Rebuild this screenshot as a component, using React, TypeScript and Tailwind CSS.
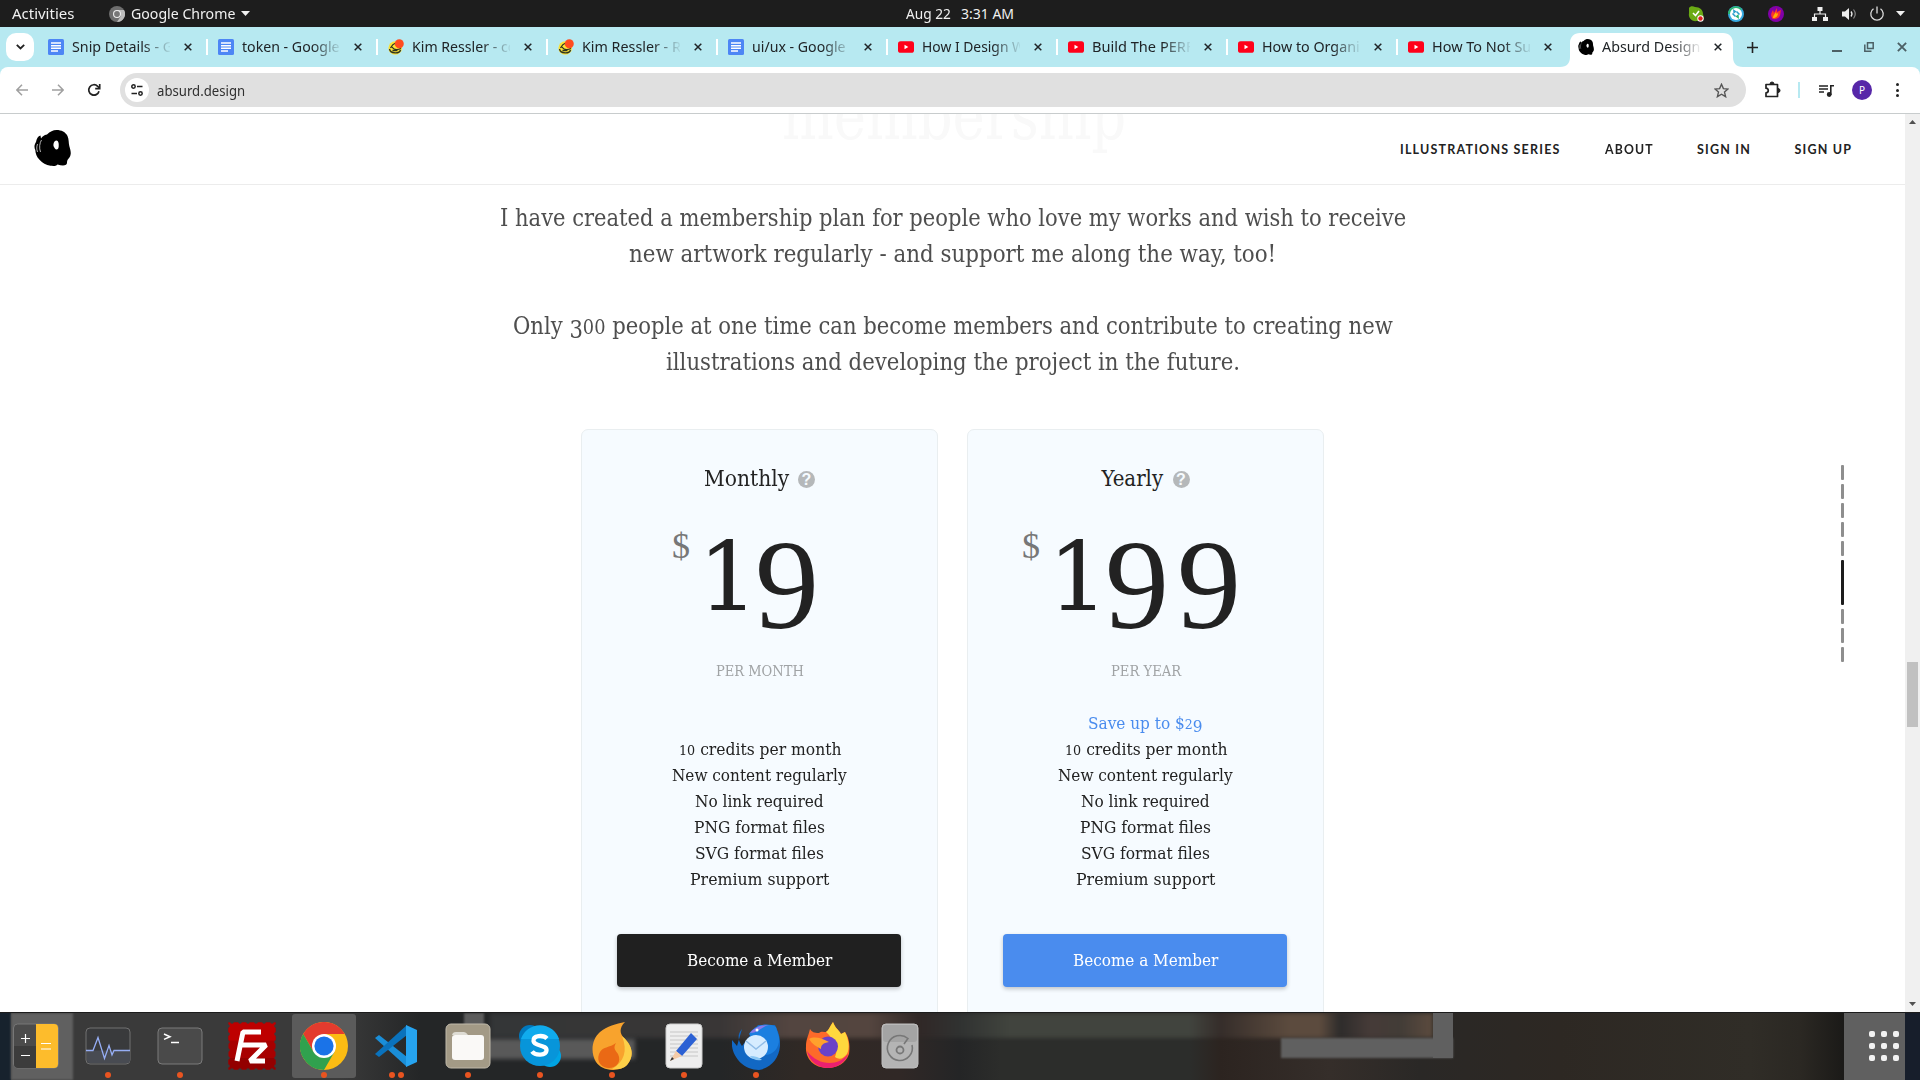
import { useLayoutEffect, useRef, useState, type ReactNode } from "react";
import clsx from "clsx";

/* Text squeezed or stretched horizontally to an exact run length. */
function Fit({ w, className, children }: { w: number; className?: string; children: ReactNode }) {
  const ref = useRef<HTMLSpanElement>(null);
  const [scale, setScale] = useState(1);
  useLayoutEffect(() => {
    if (ref.current) setScale(w / ref.current.offsetWidth);
  }, [w]);
  return (
    <span className={clsx("inline-flex shrink-0 whitespace-nowrap", className)} style={{ width: w }}>
      <span ref={ref} className="inline-block shrink-0 origin-left whitespace-pre" style={{ transform: `scaleX(${scale})` }}>
        {children}
      </span>
    </span>
  );
}

type Icon = "docs" | "kim" | "yt" | "absurd";
const tabs: { icon: Icon; title: string; w: number }[] = [
  { icon: "docs", title: "Snip Details - G", w: 101 },
  { icon: "docs", title: "token - Google", w: 98 },
  { icon: "kim", title: "Kim Ressler - co", w: 104 },
  { icon: "kim", title: "Kim Ressler - R", w: 99 },
  { icon: "docs", title: "ui/ux - Google", w: 94 },
  { icon: "yt", title: "How I Design W", w: 103 },
  { icon: "yt", title: "Build The PERF", w: 101 },
  { icon: "yt", title: "How to Organi", w: 98 },
  { icon: "yt", title: "How To Not Su", w: 99 },
  { icon: "absurd", title: "Absurd Design", w: 98 },
];

function Blob({ className }: { className: string }) {
  return (
    <svg className={className} viewBox="0 0 37 36" preserveAspectRatio="none">
      <path d="M13 4.500C16 1.500 19 0 22.500 0c5 0 9 2 11 6 1.500 3 1 7 1.800 10 .7 3 1.700 5 1.400 8-.3 3-2 4.500-3.200 6-1 2 .2 3.500-1.500 4.800-2 1.200-5 .8-8.500-.3-1.500 1.800-4.500 1.500-7 1.300-4.500-.5-8-3-11-6C2.500 27 1.500 23 1.300 20 .2 18 0 15 2 12c.5-3 2-6 4.500-6.500l.5 3c1.500-2 3-3.500 6-4Z" fill="#000" />
      <path d="M22.500 10.500c1.900.2 2.600 3 2.200 6-.2 2-.8 3-2.200 3s-2-1.500-2.800-3c-.9-2.500.8-6.200 2.800-6Z" fill="#fff" />
      <path d="M7.500 10C5.500 13 5 18 6.500 22M3.500 14c-1 3-1 5 0 8" fill="none" stroke="#fff" strokeWidth=".7" />
    </svg>
  );
}

function TabIcon({ icon }: { icon: Icon }) {
  if (icon === "absurd") return <Blob className="h-4 w-4 shrink-0" />;
  if (icon === "docs")
    return (
      <svg className="h-4 w-4 shrink-0" viewBox="0 0 16 16">
        <rect width="16" height="16" rx="1.500" fill="#4d86f5" />
        <path d="M3 4h10M3 6.700h10M3 9.300h10M3 12h7" stroke="#fff" strokeWidth="1.500" />
      </svg>
    );
  if (icon === "yt")
    return (
      <svg className="h-4 w-4 shrink-0" viewBox="0 0 16 16">
        <rect y="2.200" width="16" height="11.600" rx="2.600" fill="#ff0019" />
        <path d="M6.500 5.800v4.400l3.800-2.200Z" fill="#fff" />
      </svg>
    );
  return (
    <svg className="h-4 w-4 shrink-0" viewBox="0 0 16 16">
      <circle cx="7.200" cy="9" r="6.800" fill="#fbe136" />
      <path d="M1.500 10c1 5 10 5 11 1M2.500 9c1-2 2.500-4 5-5M4 8c1.500 2.500 5 3.500 9 1.500M4.500 11.500h5" fill="none" stroke="#2c3322" strokeWidth="1.300" />
      <circle cx="11.300" cy="4.700" r="4.500" fill="#ff4b1f" />
    </svg>
  );
}

function Cross({ size = 8 }: { size?: number }) {
  return (
    <svg width={size} height={size} viewBox="0 0 8 8" stroke="currentColor" strokeWidth="1.500">
      <path d="M.7.7l6.600 6.600M7.300.7.7 7.300" />
    </svg>
  );
}

function TopBar() {
  return (
    <div className="grid h-[27px] shrink-0 grid-cols-[906px_108px_1fr] items-center bg-[#1d1d1d] text-[14px] leading-[26px] text-[#f0f0f0]">
      <div className="flex items-center pl-3">
        <Fit w={62}>Activities</Fit>
        <svg className="ml-[35px] h-4 w-4" viewBox="0 0 16 16">
          <circle cx="8" cy="8" r="8" fill="#6e6e6e" />
          <path d="M8 4h7a8 8 0 0 1-7 12l4-6Z" fill="#bdbdbd" />
          <circle cx="8" cy="8" r="4" fill="#eee" />
          <circle cx="8" cy="8" r="2.900" fill="#777" />
        </svg>
        <Fit w={104} className="ml-1.5">Google Chrome</Fit>
        <svg className="ml-1.5 h-[5px] w-[9px]" viewBox="0 0 9 5"><path d="M0 0h9L4.500 5Z" fill="#f0f0f0" /></svg>
      </div>
      <div className="flex justify-between">
        <Fit w={45}>Aug 22</Fit>
        <Fit w={53}>3:31 AM</Fit>
      </div>
      <div className="flex items-center pl-[674px]">
        <svg className="h-4 w-4" viewBox="0 0 16 16">
          <path d="M1 2C2 0 5 0 7 1c5 0 8 3 8 7 1 3 1 6-1 7H9C4 16 0 12 1 7Z" fill="#6aaa14" />
          <path d="m5 7 2.500 2.500L11 5" fill="none" stroke="#fff" strokeWidth="1.600" />
          <circle cx="12.500" cy="12.500" r="3.200" fill="#fff" /><circle cx="12.500" cy="12.500" r="2.200" fill="#e02020" />
        </svg>
        <svg className="ml-6 h-4 w-4" viewBox="0 0 16 16">
          <circle cx="8" cy="8" r="8" fill="#36a9e1" /><path d="M0 8a8 8 0 0 1 14-5L8 8Z" fill="#2bb673" />
          <circle cx="8" cy="8" r="6" fill="#fff" />
          <path d="m5 3 3.500 2.500-3 2.500Z" fill="#2a9ecb" /><path d="m11 13-3.500-2.500 3-2.500Z" fill="#2bb673" /><path d="m4.500 7.500 3 3M8.500 5.500l3 3" stroke="#2a9ecb" strokeWidth="1.500" />
        </svg>
        <svg className="ml-6 h-4 w-4" viewBox="0 0 16 16">
          <circle cx="8" cy="8" r="8" fill="#8200a8" />
          <path d="M4 12c-2-4 0-6 1-8l1 3 3-5v4l4-2c-1 3 0 6-3 8-2 1-5 2-6 0Z" fill="#f9332e" /><path d="M5 12c0-3 2-4 3-6 0 2 1 2 2 1 0 3-2 5-5 5Z" fill="#ffb000" />
        </svg>
        <svg className="ml-7 h-4 w-4" viewBox="0 0 16 16" fill="#eee">
          <path d="M5.500 1h5v4h-5ZM0 11h5v4H0ZM11 11h5v4h-5Z" /><path d="M8 5v3M2.500 11V8h11v3" fill="none" stroke="#eee" strokeWidth="1.200" />
        </svg>
        <svg className="ml-[13px] h-4 w-4" viewBox="0 0 16 16">
          <path d="M1 5.500h3L8 2v12L4 10.500H1Z" fill="#eee" /><path d="M10 5.500q2 2.500 0 5" fill="none" stroke="#eee" strokeWidth="1.300" /><path d="M12.500 3.500q3.500 4.500 0 9" fill="none" stroke="#888" strokeWidth="1.200" />
        </svg>
        <svg className="ml-3 h-4 w-4" viewBox="0 0 16 16" fill="none" stroke="#ddd" strokeWidth="1.300">
          <path d="M4.500 2.800a6.200 6.200 0 1 0 7 0M8 .5v7" />
        </svg>
        <svg className="ml-[11px] h-[5px] w-[9px]" viewBox="0 0 9 5"><path d="M0 0h9L4.500 5Z" fill="#f0f0f0" /></svg>
      </div>
    </div>
  );
}

function TabStrip() {
  return (
    <div className="flex h-10 shrink-0 items-stretch bg-[#b7e9f1] text-[14px] text-[#202427]">
      <div className="flex w-[38px] items-center pl-1.5">
        <div className="flex h-7 w-7 items-center justify-center rounded-[10px] bg-white">
          <svg className="h-[6px] w-[9px]" viewBox="0 0 9 6" fill="none" stroke="#222" strokeWidth="1.800"><path d="m.8.8 3.700 3.700L8.200.8" /></svg>
        </div>
      </div>
      {tabs.map((t, i) => {
        const active = i === 9;
        return (
          <div key={i} className="relative flex w-[170px] items-center">
            {active && (
              <svg className="absolute -left-[8px] bottom-0 h-[34px] w-[183px]" viewBox="0 0 183 34" fill="#fff">
                <path d="M0 34c7 0 10-4 10-10V10C10 4 14 0 20 0h143c6 0 10 4 10 10v14c0 6 3 10 10 10Z" />
              </svg>
            )}
            <div className="relative flex w-full items-center pl-[10px]">
              <TabIcon icon={t.icon} />
              <div className="ml-2 w-[98px] overflow-hidden leading-5 [mask-image:linear-gradient(to_right,black_72%,transparent_102%)]">
                <Fit w={t.w}>{t.title}</Fit>
              </div>
              <span className="ml-[14px] flex"><Cross /></span>
              {i < 8 && <span className="ml-[14px] h-4 w-[2px] bg-white" />}
            </div>
          </div>
        );
      })}
      <div className="flex items-center pl-[9px] text-[#222]">
        <svg className="h-[11px] w-[11px]" viewBox="0 0 11 11" stroke="currentColor" strokeWidth="1.600"><path d="M5.500 0v11M0 5.500h11" /></svg>
      </div>
      <div className="flex items-center pl-[74px] text-[#4c6065]">
        <span className="mt-2 h-[2px] w-[10px] bg-[#4c6065]" />
        <svg className="ml-[22px] h-[10px] w-[10px]" viewBox="0 0 10 10" fill="none" stroke="currentColor" strokeWidth="1.500"><path d="M3.500.8h5.700v5.700H3.500ZM.8 2.500v6.700h6.700" /></svg>
        <span className="ml-[23px] flex"><Cross size={10} /></span>
      </div>
    </div>
  );
}

function Toolbar() {
  return (
    <div className="shrink-0 bg-[#b7e9f1]">
      <div className="flex h-[47px] items-center rounded-t-[8px] border-b border-[#c8cccd] bg-white pl-4 text-[#222]">
        <svg className="h-3 w-3" viewBox="0 0 12 12" fill="none" stroke="#a0a0a0" strokeWidth="1.500"><path d="M12 6H1M6 .8.9 6 6 11.200" /></svg>
        <svg className="ml-6 h-3 w-3" viewBox="0 0 12 12" fill="none" stroke="#a0a0a0" strokeWidth="1.500"><path d="M0 6h11M6 .8 11.100 6 6 11.200" /></svg>
        <svg className="ml-6 h-3 w-3 overflow-visible" viewBox="0 0 12 12" fill="none" stroke="#222" strokeWidth="1.700"><path d="M11 7.200A5.200 5.200 0 1 1 9.700 2.300L11.500 4" /><path d="M11.700 0v4.600H7.200" /></svg>
        <div className="ml-5 flex h-[34px] w-[1626px] items-center rounded-full bg-[#e0e0e0] pl-[5px] pr-[17px]">
          <div className="flex h-6 w-6 items-center justify-center rounded-full bg-white">
            <svg className="h-3 w-3" viewBox="0 0 12 12" fill="none" stroke="#222" strokeWidth="1.500"><circle cx="2.500" cy="2.500" r="1.700" /><path d="M6 2.500h5.500M.5 9.500H6" /><circle cx="9.500" cy="9.500" r="1.700" /></svg>
          </div>
          <Fit w={88} className="ml-2 text-[14.500px] leading-5 text-[#303030]">absurd.design</Fit>
          <svg className="ml-auto h-[15px] w-[15px]" viewBox="0 0 15 15" fill="none" stroke="#555" strokeWidth="1.400"><path d="m7.500 1.300 1.900 4.300 4.600.4-3.500 3.100 1.100 4.600-4.100-2.500-4.100 2.500 1.100-4.600L1 6l4.600-.4Z" /></svg>
        </div>
        <svg className="ml-[18px] h-[18px] w-[17px]" viewBox="0 0 17 18" fill="none" stroke="#222" strokeWidth="1.700"><path d="M2 3.500h11.500v12H2v-3.700c3 0 3-4.600 0-4.600Z" strokeLinejoin="round" /><path d="M6 3a2 2 0 0 1 4 0ZM14 7.500a2 2 0 0 1 0 4Z" fill="#222" strokeWidth="1" /></svg>
        <span className="ml-[17px] h-4 w-[2px] bg-[#b7e9f1]" />
        <svg className="ml-[19px] h-[13px] w-[15px]" viewBox="0 0 15 13" fill="none" stroke="#222" strokeWidth="1.600"><path d="M0 2h9M0 5h9M0 8h5M11.800 11V1.800H15" /><circle cx="10.200" cy="10.500" r="1.600" fill="#222" /></svg>
        <div className="ml-[18px] flex h-5 w-5 items-center justify-center rounded-full bg-[#5727a8] text-[10px] text-white">P</div>
        <div className="ml-6 flex flex-col gap-[2.500px]">
          <span className="h-[3px] w-[3px] rounded-full bg-[#222]" /><span className="h-[3px] w-[3px] rounded-full bg-[#222]" /><span className="h-[3px] w-[3px] rounded-full bg-[#222]" />
        </div>
      </div>
    </div>
  );
}

function Header() {
  return (
    <header className="flex h-[71px] shrink-0 items-center border-b border-[#ececec] pl-[34px] font-['Lato',sans-serif] text-[12.500px] font-bold text-[#222]">
      <Blob className="mb-[3px] h-9 w-[37px]" />
      <nav className="mt-[2px] ml-[1329px] flex gap-[43.500px] tracking-[1.200px]">
        <Fit w={161}>ILLUSTRATIONS SERIES</Fit>
        <Fit w={49}>ABOUT</Fit>
        <Fit w={54}>SIGN IN</Fit>
        <Fit w={58}>SIGN UP</Fit>
      </nav>
    </header>
  );
}

const features: { node: ReactNode; w: number }[] = [
  { node: <><span className="inline-block text-[0.82em] leading-none">10</span> credits per month</>, w: 162 },
  { node: "New content regularly", w: 175 },
  { node: "No link required", w: 129 },
  { node: "PNG format files", w: 131 },
  { node: "SVG format files", w: 129 },
  { node: "Premium support", w: 139 },
];

function Nine() {
  return <span className="inline-block translate-y-[18px] font-['Liberation_Serif',serif] text-[128px] leading-[110px]">9</span>;
}

function Card({ title, titleW, yearly }: { title: string; titleW: number; yearly?: boolean }) {
  return (
    <div className="flex h-[640px] w-[357px] flex-col items-center rounded-[7px] border border-[#e9eef0] bg-[#f6fbff] pt-[33px] text-[#222]">
      <div className="flex h-8 items-center text-[22px] leading-8">
        <Fit w={titleW}>{title}</Fit>
        <span className="ml-[9px] flex h-[17px] w-[17px] items-center justify-center rounded-full bg-[#b5b8ba]">
          <span className="font-['Liberation_Sans',sans-serif] text-[16px] leading-[17px] font-bold text-[#f6fbff]">?</span>
        </span>
      </div>
      <div className="mt-[9px] flex h-[150px] w-full items-start">
        <Fit w={18} className={clsx("h-12 pt-[18px] leading-[48px] text-[#777]", yearly ? "ml-[54px]" : "ml-[90px]")}>
          <span className="font-['Liberation_Serif',serif] text-[36px]">$</span>
        </Fit>
        <div className="mt-[8px] ml-[8px] flex h-[110px] items-baseline leading-[110px]">
          <Fit w={60}><span className="text-[95px]">1</span></Fit>
          <span className="ml-[-3px]"><Nine /></span>
          {yearly && <span className="ml-[8px]"><Nine /></span>}
        </div>
      </div>
      <Fit w={yearly ? 70 : 88} className="mt-[5px] text-[14px] leading-6 text-[#a0a3a5]">{yearly ? "PER YEAR" : "PER MONTH"}</Fit>
      <div className="mt-[28px] flex flex-col items-center text-[16px] leading-[26px]">
        <div className="flex h-[26px]">{yearly && <Fit w={115} className="text-[#4a8cee]">{"Save up to $"}<span className="inline-block text-[0.82em] leading-none">2</span><span className="inline-block translate-y-[3px] leading-none">9</span></Fit>}</div>
        {features.map((f, i) => <div key={i} className="flex h-[26px]"><Fit w={f.w}>{f.node}</Fit></div>)}
      </div>
      <div className={clsx("mt-[41px] mr-px flex h-[53px] w-[284px] items-center justify-center rounded-[4px] text-[16px] leading-[26px] text-white shadow-[0_2px_4px_rgba(0,0,0,0.22)]", yearly ? "bg-[#4a8cee]" : "bg-[#202020]")}>
        <Fit w={145}>Become a Member</Fit>
      </div>
    </div>
  );
}

const serif = "font-['DejaVu_Serif',serif] font-stretch-condensed";

function Page() {
  return (
    <div className="flex h-[898px] shrink-0 overflow-hidden bg-white">
      <div className="relative flex w-[1905px] flex-col">
        <div className={clsx("absolute top-0 left-[782px] h-[60px] overflow-hidden text-[#f9f9f9]", serif)}>
          <Fit w={344} className="-mt-[43px] text-[68px] leading-[90px]">membership</Fit>
        </div>
        <div className="relative"><Header /></div>
        <main className={clsx("flex flex-col items-center", serif)}>
          <div className="mt-[15px] flex flex-col items-center text-[24.500px] leading-[36px] text-[#4e4e4e]">
            <Fit w={906} className="h-9">I have created a membership plan for people who love my works and wish to receive</Fit>
            <Fit w={647} className="h-9">new artwork regularly - and support me along the way, too!</Fit>
            <Fit w={880} className="mt-9 h-9">
              {"Only "}<span className="inline-block translate-y-[4px] leading-none">3</span><span className="inline-block text-[0.84em] leading-none">00</span>{" people at one time can become members and contribute to creating new"}
            </Fit>
            <Fit w={574} className="h-9">illustrations and developing the project in the future.</Fit>
          </div>
          <div className="mt-[49px] flex gap-[29px]">
            <Card title="Monthly" titleW={85} />
            <Card title="Yearly" titleW={62} yearly />
          </div>
        </main>
        <div className="absolute top-[351px] left-[1841px] flex flex-col gap-1">
          {Array.from({ length: 9 }, (_, i) => (
            <span key={i} className={clsx("w-[3px] rounded-[1px]", i === 5 ? "h-[45px] bg-[#1c1c1c]" : "h-[15px] bg-[#8e8e8e]")} />
          ))}
        </div>
      </div>
      <div className="flex w-[15px] flex-col items-center bg-[#f0f0f0]">
        <svg className="mt-[6px] h-1 w-[7px] shrink-0" viewBox="0 0 7 4"><path d="M0 4h7L3.500 0Z" fill="#505050" /></svg>
        <div className="mt-[538px] h-[65px] w-[11px] shrink-0 bg-[#c1c1c1]" />
        <svg className="mt-auto mb-[6px] h-1 w-[7px] shrink-0" viewBox="0 0 7 4"><path d="M0 0h7L3.500 4Z" fill="#505050" /></svg>
      </div>
    </div>
  );
}

const stamp = Array.from({ length: 6 }, (_, i) => 4 + i * 8);

const dock: { dots: number; active?: boolean; art: ReactNode }[] = [
  { dots: 0, art: <>
    <rect x="1.500" y="2" width="45" height="44" rx="4" fill="#4b4b4b" stroke="#777" /><path d="M24 2h18q4 0 4 4v36q0 4-4 4H24Z" fill="#fdbc2c" /><path d="M2 24h22v22H6q-4 0-4-4Z" fill="#3c3c3c" />
    <path d="M9 16.500h9M13.500 12v9M9 33.500h9M29 21.500h10M29 27h10" stroke="#fff" strokeWidth="1.200" /></> },
  { dots: 1, art: <>
    <rect x="2" y="6" width="44" height="36" rx="4" fill="#393a3c" stroke="#707070" /><path d="M3 28.500h43V38q0 3-3 3H6q-3 0-3-3Z" fill="#484b52" />
    <path d="M2 28.500h7l5-13 6.500 21 4.500-13 3 9.500 2-4.500h16" fill="none" stroke="#96aef5" strokeWidth="1.300" /></> },
  { dots: 1, art: <>
    <rect x="2" y="6" width="44" height="36" rx="4" fill="#4a4a4a" stroke="#7a7a7a" /><path d="m8 12 6 2.700-6 2.700M15 20.500h8" fill="none" stroke="#fff" strokeWidth="1.500" /></> },
  { dots: 0, art: <>
    <rect x="0.500" y="0.500" width="47" height="47" fill="#a80000" /><rect x="0.500" y="0.500" width="47" height="18" fill="#be0000" /><rect x="0.500" y="36" width="47" height="11.500" fill="#930000" />
    {stamp.map((p) => <g key={p} fill="#3a3a3a"><circle cx={p} cy="0" r="1.800" /><circle cx={p} cy="48" r="1.800" /><circle cx="0" cy={p} r="1.800" /><circle cx="48" cy={p} r="1.800" /></g>)}
    <path d="M9 39 15 10h18M12 23h15M24 23h14L22 39h15" fill="none" stroke="#fff" strokeWidth="5" strokeLinejoin="bevel" /></> },
  { dots: 1, active: true, art: <>
    <circle cx="24" cy="24" r="24" fill="#fbbc13" /><path d="M3.200 12A24 24 0 0 1 44.800 12H24L13.600 30Z" fill="#e33b2e" /><path d="M3.200 12A24 24 0 0 0 24 48l10.400-18H13.600Z" fill="#30a14e" />
    <circle cx="24" cy="24" r="12" fill="#fff" /><circle cx="24" cy="24" r="9.600" fill="#1a73e8" /></> },
  { dots: 2, art: <>
    <path d="m3 16 4-3 28 22v10Z" fill="#1a8ed8" /><path d="m3 32 4 3 28-22V3Z" fill="#0a72bc" /><path d="m34 3 11 5v32l-11 5Z" fill="#26a4f0" /></> },
  { dots: 1, art: <>
    <rect x="2" y="2" width="44" height="44" rx="5" fill="#a39a86" stroke="#c0b9aa" /><path d="M8 14q0-4 4-4h8q2 0 4 3H8Z" fill="#dedcd4" /><rect x="8" y="13" width="32" height="25" rx="3" fill="#faf9f7" /></> },
  { dots: 1, art: <>
    <circle cx="14" cy="14" r="11" fill="#0078bd" /><circle cx="34" cy="34" r="11" fill="#00a4e4" /><circle cx="24" cy="24" r="20" fill="#0795da" /><path d="M5 17a20 20 0 0 1 38 0Z" fill="#10abed" />
    <path d="M31 16.500c-4-4-14-3-13.500 2.500.5 5.500 13.500 3.500 13 9.500-.4 5-11 5.500-14.500 1" fill="none" stroke="#fff" strokeWidth="4.300" /></> },
  { dots: 1, art: <>
    <path d="M37 0C31 6 32 11 35 15c9 8 12 18 4 28-9 8-25 6-31-3C2 30 4 17 12 10 19 4 28 2 37 0Z" fill="#f8a32d" /><path d="M34 14c9 8 14 18 5 29-5 5-12 4-15 4 12-7 16-18 10-33Z" fill="#fdd048" />
    <path d="M28 21c-3 5-1 7 2 11 4 8-2 14-9 14S8 40 11 32c3-8 11-6 17-11Z" fill="#ea6915" /></> },
  { dots: 1, art: <>
    <rect x="6" y="2" width="36" height="44" rx="4" fill="#eee" stroke="#ccc" /><path d="M10 10h28M10 14h28M10 18h28M10 22h28M10 26h28M10 30h28M10 34h28" stroke="#c6c6c6" />
    <path d="m16 29 15-18 6 6-15 17Z" fill="#2c61d4" /><path d="m16 29 6 5-12 5Z" fill="#f4cba8" /><path d="m10 39 2-4 2 2Z" fill="#333" /></> },
  { dots: 1, art: <>
    <path d="M10 7c-5 6-4 11 0 17L26 3h17l3 7c6 16-1 35-19 38C10 48-2 32 0 18l5 6Z" fill="#1268c4" /><path d="M17 12c5-9 18-12 27-7l3 10c1 10-5 17-13 18Z" fill="#1b7fe0" /><path d="M18 11c5-6 11-8 19-8-8 2-11 8-19 8Z" fill="#8b7be8" />
    <circle cx="24" cy="25" r="12" fill="#d6ecff" /><path d="m14 19 10 8 10-8" fill="none" stroke="#91bde8" strokeWidth="1.500" /><path d="M18 34q8 0 12 4-9 1-12-4Z" fill="#8bc7f4" /><circle cx="25" cy="8" r="1.500" fill="#fff" /></> },
  { dots: 0, art: <>
    <path d="M6 7c2 3 4 4 9 4 2-2 5-1 7-1 3-2 4-6 7-10 2 6 6 8 8 12l4-2c5 7 5 16 4 22-3 9-12 14-21 14C10 46 1 37 2 24c0-6 2-9 4-17Z" fill="#fd6a2a" />
    <path d="M22 10c3-2 4-6 7-10 2 6 6 8 8 12l4-2c4 8 5 16 2 22-4 5-8 6-12 3 5-12-2-18-9-25Z" fill="#ffd83d" /><path d="M3 29c2 10 11 17 21 17 9 0 18-6 20-14-9 12-29 13-41-3Z" fill="#ec2070" />
    <circle cx="24" cy="24.500" r="10" fill="#6a42c8" /><path d="M5 17c5-3 13-1 20 3-6 1-8 3-8 7-4-2-9-5-12-10Z" fill="#ffa12c" /></> },
  { dots: 0, art: <>
    <rect x="6" y="2" width="36" height="44" rx="4" fill="#b4b4b4" stroke="#bebebe" /><rect x="7" y="3" width="34" height="17" rx="3" fill="#a4a4a4" />
    <path d="M36 23a12.500 12.500 0 1 1-4-6.500l-4 5.500" fill="none" stroke="#777" strokeWidth="1.600" /><circle cx="24" cy="28" r="3.500" fill="none" stroke="#777" strokeWidth="1.800" /></> },
];

function Dock() {
  return (
    <div className="relative h-[68px] shrink-0 overflow-hidden border-t border-[#1c1c1c] bg-[#242627]">
      {/* blurred desktop behind the translucent dock */}
      <div className="absolute inset-0 bg-[linear-gradient(90deg,#3a3a3a_0,#3a3a3a_340px,#242627_420px,#242627_720px,#302925_800px,#302826_900px,#242526_960px,#2c2d2b_1000px,#2c2d2b_1190px,#2c2420_1220px,#352e2a_1330px,#2a2826_1420px,#2d2823_1560px,#302d27_1750px,#2b2823_1800px,#1b1a18_1843px)]" />
      <div className="absolute top-0 left-[490px] h-[25px] w-[943px] bg-[linear-gradient(90deg,#343637_0,#393636_230px,#534540_300px,#54453f_380px,#302827_430px,#303231_470px,#41443e_520px,#41443e_700px,#352d2a_730px,#5c4b3e_800px,#5c4b3e_830px,#2e2c2b_850px,#463b38_880px,#423c37_910px,#5c4b3e_943px)] blur-[2px]" />
      <div className="absolute top-0 left-0 h-full w-[11px] bg-[#17222d]" />
      <div className="absolute top-0 left-[11px] h-full w-[62px] bg-[#606060] blur-[1px]" />
      <div className="absolute top-0 left-[464px] h-[46px] w-[20px] bg-[#5c5c5c] blur-[1px]" />
      <div className="absolute top-[26px] left-[464px] h-[20px] w-[171px] bg-[#595959] blur-[2px]" />
      <div className="absolute top-[25px] left-[1281px] h-[20px] w-[172px] bg-[#606060] blur-[1px]" />
      <div className="absolute top-0 left-[1433px] h-[45px] w-[20px] bg-[#606060] blur-[0.500px]" />
      <div className="absolute top-0 left-[1844px] h-full w-[61px] bg-[#606060]" />
      <div className="absolute top-0 left-[1905px] h-full w-[15px] bg-[#171e2b]" />
      <div className="relative flex h-full items-start justify-between pr-[21px]">
        <div className="flex gap-2 pl-1">
          {dock.map((d, i) => (
            <div key={i} className={clsx("mt-px flex h-16 w-16 flex-col items-center rounded-[3px] pt-2", d.active && "bg-[#5b5b5b]")}>
              <svg className="h-12 w-12 shrink-0" viewBox="0 0 48 48">{d.art}</svg>
              <div className="mt-[2px] flex gap-[3px]">
                {Array.from({ length: d.dots }, (_, k) => <span key={k} className="h-[6px] w-[6px] rounded-full bg-[#e95420]" />)}
              </div>
            </div>
          ))}
        </div>
        <div className="mt-[18px] grid grid-cols-3 gap-[6px]">
          {Array.from({ length: 9 }, (_, i) => <span key={i} className="h-[6px] w-[6px] rounded-[2px] bg-[#f2f2f2]" />)}
        </div>
      </div>
    </div>
  );
}

export default function App() {
  return (
    <div className="flex h-[1080px] w-[1920px] flex-col overflow-hidden bg-white font-['Noto_Sans',sans-serif]">
      <TopBar />
      <TabStrip />
      <Toolbar />
      <Page />
      <Dock />
    </div>
  );
}
